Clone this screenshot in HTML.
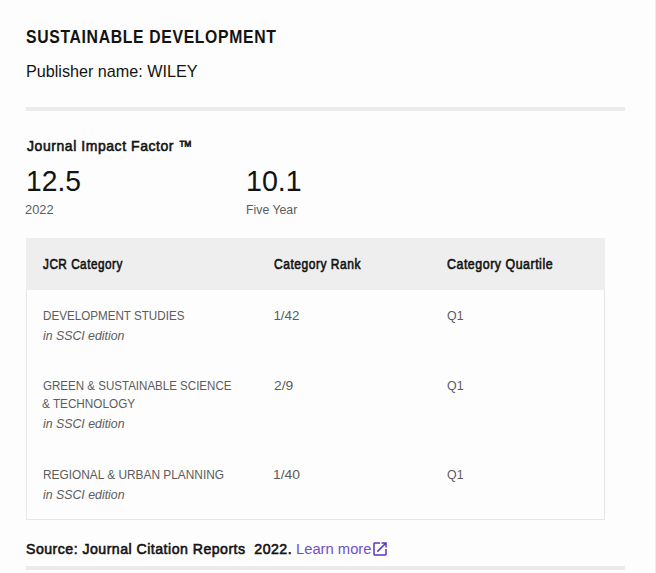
<!DOCTYPE html><html><head><meta charset='utf-8'><style>
html,body{margin:0;padding:0;}
body{width:656px;height:573px;background:#fdfdfd;position:relative;overflow:hidden;font-family:"Liberation Sans",sans-serif;}
.t{position:absolute;white-space:pre;line-height:1;transform-origin:0 0;}
.bar{position:absolute;background:#ebebeb;}
</style></head><body><div class="bar" style="left:26px;top:107px;width:599px;height:4px"></div>
<div style="position:absolute;left:26px;top:238px;width:579px;height:52px;background:#eeeeee"></div>
<div style="position:absolute;left:26px;top:290px;width:577px;height:229px;border:1px solid #e6e6e6;border-top:none"></div>
<div class="bar" style="left:26px;top:566px;width:599px;height:4px"></div>
<div style="position:absolute;left:655px;top:0;width:1px;height:573px;background:#ececec"></div>
<div class="t" id="t1" style="left:25.83px;top:28.20px;font-size:18.9px;font-weight:700;font-style:normal;color:#131313;letter-spacing:0.8px;transform:scaleX(0.8339)">SUSTAINABLE DEVELOPMENT</div>
<div class="t" id="t2" style="left:25.83px;top:63.02px;font-size:16.4px;font-weight:400;font-style:normal;color:#131313;letter-spacing:0px;transform:scaleX(0.9859)">Publisher name: WILEY</div>
<div class="t" id="t3" style="left:26.71px;top:137.70px;font-size:15.0px;font-weight:400;-webkit-text-stroke:0.6px #131313;font-style:normal;color:#131313;letter-spacing:0.6px;transform:scaleX(0.9326)">Journal Impact Factor ™</div>
<div class="t" id="t4" style="left:26.00px;top:167.44px;font-size:28.9px;font-weight:400;font-style:normal;color:#131313;letter-spacing:0px;transform:scaleX(0.9788)">12.5</div>
<div class="t" id="t5" style="left:246.30px;top:166.30px;font-size:29.3px;font-weight:400;font-style:normal;color:#131313;letter-spacing:0px;transform:scaleX(0.9771)">10.1</div>
<div class="t" id="t6" style="left:25.29px;top:202.83px;font-size:13.2px;font-weight:400;font-style:normal;color:#5c5c5c;letter-spacing:0px;transform:scaleX(0.9756)">2022</div>
<div class="t" id="t7" style="left:246.32px;top:202.70px;font-size:13.0px;font-weight:400;font-style:normal;color:#5c5c5c;letter-spacing:0px;transform:scaleX(0.9450)">Five Year</div>
<div class="t" id="h1" style="left:43.20px;top:257.52px;font-size:13.8px;font-weight:400;-webkit-text-stroke:0.6px #131313;font-style:normal;color:#131313;letter-spacing:0.6px;transform:scaleX(0.8510)">JCR Category</div>
<div class="t" id="h2" style="left:274.30px;top:257.52px;font-size:13.8px;font-weight:400;-webkit-text-stroke:0.6px #131313;font-style:normal;color:#131313;letter-spacing:0.6px;transform:scaleX(0.8713)">Category Rank</div>
<div class="t" id="h3" style="left:447.40px;top:257.52px;font-size:13.8px;font-weight:400;-webkit-text-stroke:0.6px #131313;font-style:normal;color:#131313;letter-spacing:0.6px;transform:scaleX(0.8968)">Category Quartile</div>
<div class="t" id="r1a" style="left:42.76px;top:308.66px;font-size:13.4px;font-weight:400;font-style:normal;color:#5c5c5c;letter-spacing:0px;transform:scaleX(0.8692)">DEVELOPMENT STUDIES</div>
<div class="t" id="r1b" style="left:43.30px;top:329.16px;font-size:13.4px;font-weight:400;font-style:italic;color:#5c5c5c;letter-spacing:0px;transform:scaleX(0.9182)">in SSCI edition</div>
<div class="t" id="r1c" style="left:273.40px;top:309.36px;font-size:13.4px;font-weight:400;font-style:normal;color:#5c5c5c;letter-spacing:0px;transform:scaleX(1.0000)">1/42</div>
<div class="t" id="r1d" style="left:446.51px;top:309.36px;font-size:13.4px;font-weight:400;font-style:normal;color:#5c5c5c;letter-spacing:0px;transform:scaleX(0.9252)">Q1</div>
<div class="t" id="r2a" style="left:42.61px;top:378.86px;font-size:13.4px;font-weight:400;font-style:normal;color:#5c5c5c;letter-spacing:0px;transform:scaleX(0.8624)">GREEN &amp; SUSTAINABLE SCIENCE</div>
<div class="t" id="r2e" style="left:42.48px;top:397.46px;font-size:13.4px;font-weight:400;font-style:normal;color:#5c5c5c;letter-spacing:0px;transform:scaleX(0.8770)">&amp; TECHNOLOGY</div>
<div class="t" id="r2b" style="left:43.30px;top:417.26px;font-size:13.4px;font-weight:400;font-style:italic;color:#5c5c5c;letter-spacing:0px;transform:scaleX(0.9204)">in SSCI edition</div>
<div class="t" id="r2c" style="left:273.90px;top:378.86px;font-size:13.4px;font-weight:400;font-style:normal;color:#5c5c5c;letter-spacing:0px;transform:scaleX(1.0348)">2/9</div>
<div class="t" id="r2d" style="left:446.51px;top:378.86px;font-size:13.4px;font-weight:400;font-style:normal;color:#5c5c5c;letter-spacing:0px;transform:scaleX(0.9252)">Q1</div>
<div class="t" id="r3a" style="left:43.07px;top:467.66px;font-size:13.4px;font-weight:400;font-style:normal;color:#5c5c5c;letter-spacing:0px;transform:scaleX(0.8870)">REGIONAL &amp; URBAN PLANNING</div>
<div class="t" id="r3b" style="left:43.30px;top:487.66px;font-size:13.4px;font-weight:400;font-style:italic;color:#5c5c5c;letter-spacing:0px;transform:scaleX(0.9204)">in SSCI edition</div>
<div class="t" id="r3c" style="left:273.00px;top:467.66px;font-size:13.4px;font-weight:400;font-style:normal;color:#5c5c5c;letter-spacing:0px;transform:scaleX(1.0375)">1/40</div>
<div class="t" id="r3d" style="left:446.51px;top:467.66px;font-size:13.4px;font-weight:400;font-style:normal;color:#5c5c5c;letter-spacing:0px;transform:scaleX(0.9252)">Q1</div>
<div class="t" id="s1" style="left:25.94px;top:542.36px;font-size:14.7px;font-weight:400;-webkit-text-stroke:0.6px #131313;font-style:normal;color:#131313;letter-spacing:0.5px;transform:scaleX(0.9618)">Source: Journal Citation Reports  2022.</div>
<div class="t" id="s2" style="left:295.82px;top:540.93px;font-size:15.2px;font-weight:400;font-style:normal;color:#7050cb;letter-spacing:0px;transform:scaleX(0.9715)">Learn more</div>
<svg style="position:absolute;left:371.45px;top:539.85px" width="18" height="18" viewBox="0 0 24 24"><path fill="#5e33bf" d="M19 19H5V5h7V3H5c-1.11 0-2 .9-2 2v14c0 1.1.89 2 2 2h14c1.1 0 2-.9 2-2v-7h-2v7zM14 3v2h3.59l-9.83 9.83 1.41 1.41L19 6.41V10h2V3h-7z"/></svg></body></html>
